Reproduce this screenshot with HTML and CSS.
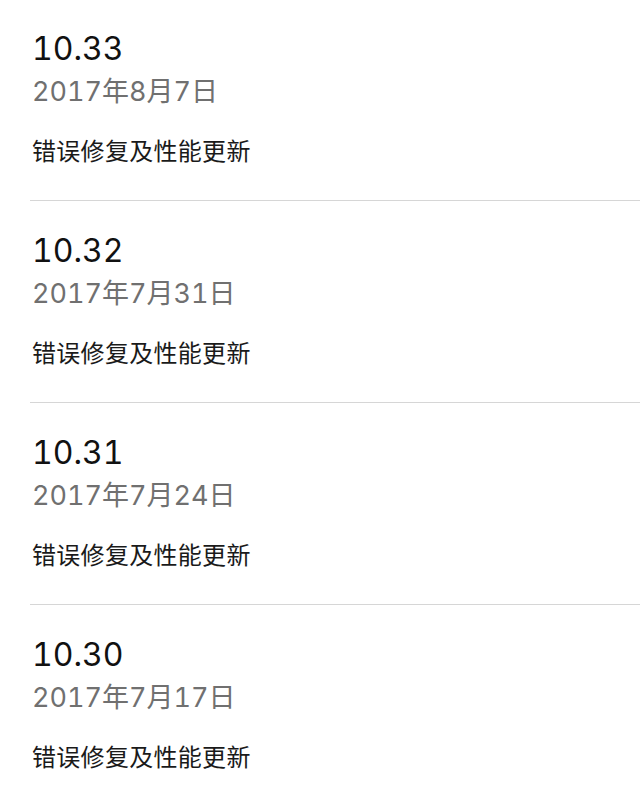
FILE: index.html
```html
<!DOCTYPE html>
<html>
<head>
    <meta charset="utf-8">
    <link rel="stylesheet" href="styles.css">
</head>
<body>
<div class="history">
    <div class="release">
        <div class="version">10.33</div>
        <div class="date">2017年8月7日</div>
        <div class="notes">错误修复及性能更新</div>
    </div>
    <div class="release">
        <div class="version">10.32</div>
        <div class="date">2017年7月31日</div>
        <div class="notes">错误修复及性能更新</div>
    </div>
    <div class="release">
        <div class="version">10.31</div>
        <div class="date">2017年7月24日</div>
        <div class="notes">错误修复及性能更新</div>
    </div>
    <div class="release">
        <div class="version">10.30</div>
        <div class="date">2017年7月17日</div>
        <div class="notes">错误修复及性能更新</div>
    </div>
</div>
</body>
</html>
```

FILE: styles.css
```css
body{
    margin:0;
    background:#fff;
    font-family: Inter, "Noto Sans CJK SC", sans-serif;
    overflow:hidden;
}
.history{
    margin-top:-1px;
}
.release{
    margin-left:30px;
    padding:30px 0 32px 2px;
    border-bottom:1px solid #d6d6d6;
}
.version{
    font-size:32px;
    line-height:40px;
    font-variant-numeric: tabular-nums;
    color:#111;
}
.date{
    margin-top:6px;
    font-size:27px;
    line-height:34px;
    font-variant-numeric: tabular-nums;
    color:#707070;
}
.notes{
    margin-top:27px;
    font-size:24px;
    line-height:32px;
    letter-spacing:0.3px;
    color:#1a1a1a;
}
```
